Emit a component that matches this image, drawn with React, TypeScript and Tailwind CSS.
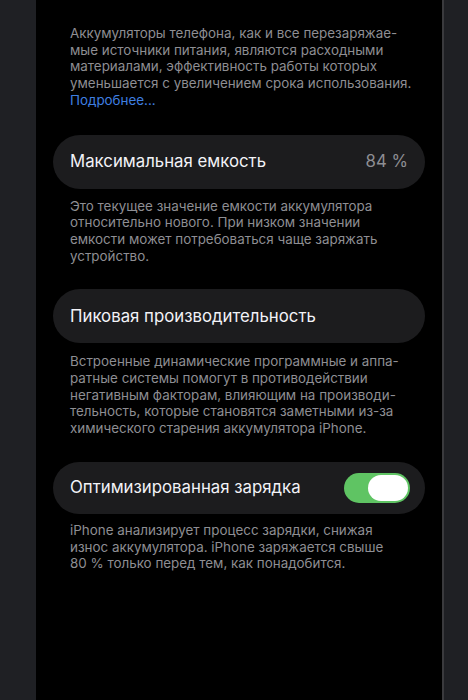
const Note = ({ lines, className = '' }: { lines: string[]; className?: string }) => (
  <p className={`whitespace-nowrap px-[34px] text-[13.4px] leading-[16.7px] text-[#8e8e93] ${className}`}>
    {lines.map((l, i) => (
      <span key={i} className="block">
        {l}
      </span>
    ))}
  </p>
)

export default function App() {
  return (
    <div className="flex h-[700px] w-[468px] overflow-hidden bg-[#1f2024] font-['Inter','Noto_Sans',sans-serif]">
      <div className="w-[36px] shrink-0" />
      <div className="flex w-[406px] shrink-0 flex-col bg-black pt-[25px]">
        <p className="whitespace-nowrap px-[34px] text-[13.4px] leading-[16.7px] text-[#8e8e93]">
          <span className="block">Аккумуляторы телефона, как и все перезаряжае-</span>
          <span className="block">мые источники питания, являются расходными</span>
          <span className="block">материалами, эффективность работы которых</span>
          <span className="block">уменьшается с увеличением срока использования.</span>
          <span className="block text-[#3f7fe0]">Подробнее...</span>
        </p>

        <div className="mx-[17px] mt-[26px] flex h-[54px] items-center justify-between rounded-full bg-[#1c1c1e] px-[17px]">
          <span className="text-[16.8px] text-[#f2f2f7]">Максимальная емкость</span>
          <span className="text-[16.8px] text-[#8e8e93]">84 %</span>
        </div>
        <Note
          className="mt-[9px]"
          lines={[
            'Это текущее значение емкости аккумулятора',
            'относительно нового. При низком значении',
            'емкости может потребоваться чаще заряжать',
            'устройство.',
          ]}
        />

        <div className="mx-[17px] mt-[25px] flex h-[54px] items-center rounded-full bg-[#1c1c1e] px-[17px]">
          <span className="text-[16.8px] text-[#f2f2f7]">Пиковая производительность</span>
        </div>
        <Note
          className="mt-[10px] leading-[16.3px]"
          lines={[
            'Встроенные динамические программные и аппа-',
            'ратные системы помогут в противодействии',
            'негативным факторам, влияющим на производи-',
            'тельность, которые становятся заметными из-за',
            'химического старения аккумулятора iPhone.',
          ]}
        />

        <div className="mx-[17px] mt-[25px] flex h-[52px] items-center justify-between rounded-full bg-[#1c1c1e] pl-[17px] pr-[15px]">
          <span className="text-[16.8px] text-[#f2f2f7]">Оптимизированная зарядка</span>
          <div className="flex h-[30px] w-[66px] items-center justify-end rounded-full bg-[#5fc463] pr-[2px]">
            <div className="h-[26px] w-[40px] rounded-full bg-white" />
          </div>
        </div>
        <Note
          className="mt-[8px]"
          lines={[
            'iPhone анализирует процесс зарядки, снижая',
            'износ аккумулятора. iPhone заряжается свыше',
            '80 % только перед тем, как понадобится.',
          ]}
        />
      </div>
      <div className="w-[2px] shrink-0 bg-[#3a3a3d]" />
      <div className="flex-1" />
    </div>
  )
}
